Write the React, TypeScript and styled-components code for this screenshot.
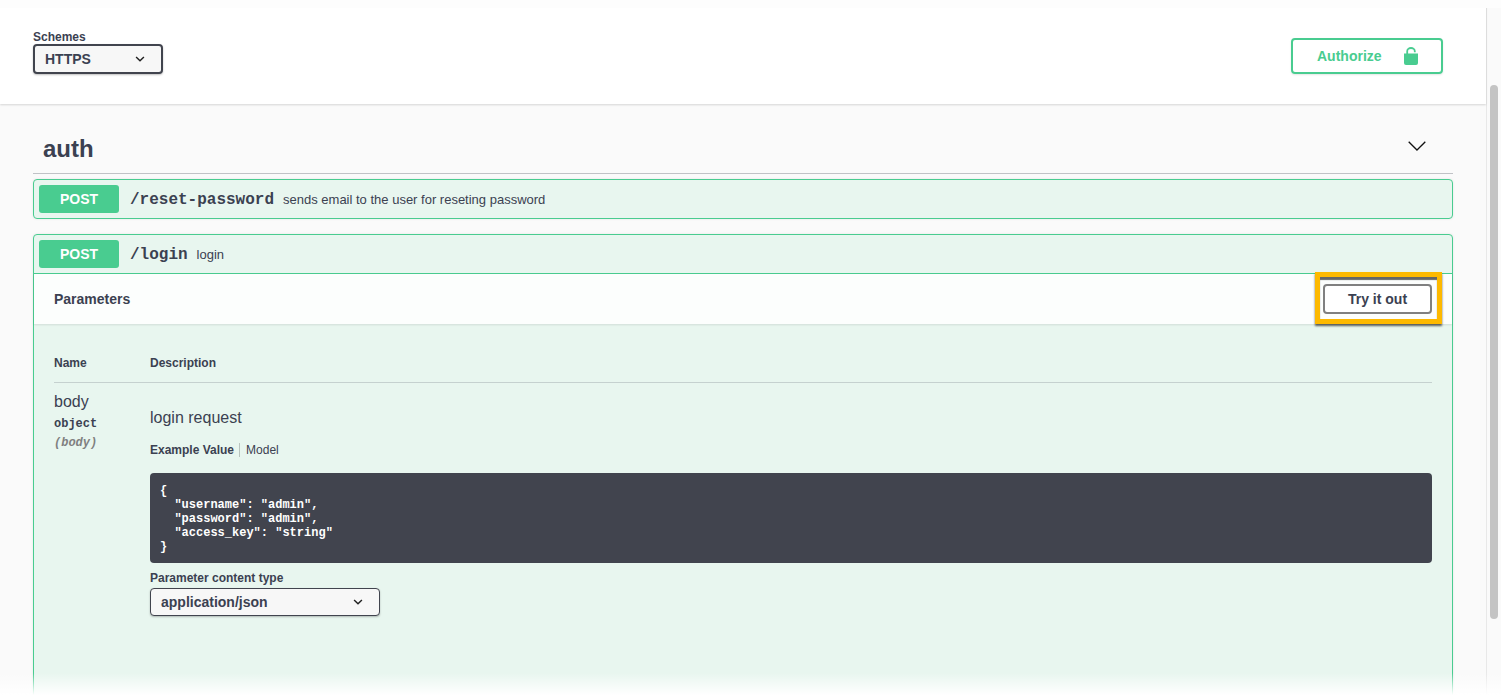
import React, { FC } from 'react';
import styled, { createGlobalStyle } from 'styled-components';

const colours = {
  ink: '#3b4151',
  dark: '#41444e',
  green: '#49cc90',
  greenTint: '#e8f6ef',
  page: '#fafafa',
};

const sans = `'Liberation Sans', Arial, sans-serif`;
const mono = `'Liberation Mono', monospace`;

const GlobalStyle = createGlobalStyle`
  html, body {
    margin: 0;
    height: 100%;
    overflow: hidden;
    background: ${colours.page};
  }
`;

const Page = styled.div`
  display: flex;
  height: 695px;
  position: relative;
  overflow: hidden;
  font-family: ${sans};
  color: ${colours.ink};
`;

const Main = styled.div`
  flex: 1;
  min-width: 0;
  background: ${colours.page};
`;

const ScrollTrack = styled.div`
  width: 15px;
  flex: none;
  background: #fafafa;
  border-left: 1px solid #e8e8e8;
  padding: 85px 3px 0 3px;
  box-sizing: border-box;
`;

const ScrollThumb = styled.div`
  height: 534px;
  background: #c4c4c4;
  border-radius: 4px;
`;

const SchemeBar = styled.header`
  height: 104px;
  box-sizing: border-box;
  background: #fff;
  box-shadow: 0 1px 2px rgba(0, 0, 0, 0.15);
  padding: 30px 43px 0 33px;
  display: flex;
  justify-content: space-between;
  position: relative;
`;

const SchemeLabel = styled.div`
  font-size: 12px;
  font-weight: 700;
  line-height: 14px;
`;

const Select = styled.div<{ $width: number; $thick?: boolean }>`
  width: ${p => p.$width}px;
  height: ${p => (p.$thick ? 30 : 28)}px;
  box-sizing: border-box;
  border: ${p => (p.$thick ? 2 : 1)}px solid ${colours.dark};
  border-radius: 4px;
  background: #f7f7f7;
  box-shadow: 0 1px 2px 0 rgba(0, 0, 0, 0.25);
  display: flex;
  align-items: center;
  justify-content: space-between;
  padding: 0 15px 0 10px;
  font-size: 14px;
  font-weight: 700;
`;

const AuthorizeButton = styled.div`
  width: 152px;
  height: 36px;
  margin-top: 8px;
  box-sizing: border-box;
  border: 2px solid ${colours.green};
  border-radius: 4px;
  box-shadow: 0 1px 2px rgba(0, 0, 0, 0.1);
  color: ${colours.green};
  font-size: 14px;
  font-weight: 700;
  display: flex;
  align-items: center;
  gap: 22px;
  padding-left: 24px;
`;

const Content = styled.main`
  padding: 0 33px;
`;

const TagHeader = styled.div`
  height: 70px;
  box-sizing: border-box;
  padding: 0 27px 0 10px;
  border-bottom: 1px solid rgba(59, 65, 81, 0.3);
  display: flex;
  align-items: center;
  justify-content: space-between;
  font-size: 24px;
  font-weight: 700;
`;

const TagTitle = styled.span`
  margin-top: 20px;
`;

const TagChevron = styled.svg`
  margin-top: 14px;
  display: block;
`;

const OpBlock = styled.section<{ $open?: boolean }>`
  margin-top: ${p => (p.$open ? 15 : 5)}px;
  border: 1px solid ${colours.green};
  border-radius: 4px;
  background: ${colours.greenTint};
  box-shadow: 0 0 3px rgba(0, 0, 0, 0.08);
  ${p => p.$open && 'height: 500px;'}
`;

const OpSummary = styled.div<{ $open?: boolean }>`
  height: ${p => (p.$open ? 39 : 38)}px;
  box-sizing: border-box;
  padding-left: 5px;
  display: flex;
  align-items: center;
  ${p => p.$open && `border-bottom: 1px solid ${colours.green};`}
`;

const MethodBadge = styled.span`
  width: 80px;
  height: 28px;
  border-radius: 3px;
  background: ${colours.green};
  color: #fff;
  font-size: 14px;
  font-weight: 700;
  display: flex;
  align-items: center;
  justify-content: center;
`;

const OpPath = styled.span`
  margin: 1px 0 0 11px;
  font-family: ${mono};
  font-size: 16px;
  font-weight: 700;
`;

const OpDesc = styled.span`
  margin: 1px 0 0 9px;
  font-size: 13px;
`;

const ParamsHeader = styled.div`
  height: 50px;
  box-sizing: border-box;
  padding: 0 20px;
  background: rgba(255, 255, 255, 0.85);
  box-shadow: 0 1px 2px rgba(0, 0, 0, 0.1);
  display: flex;
  align-items: center;
  justify-content: space-between;
  font-size: 14px;
  font-weight: 700;
  position: relative;
`;

const TryButton = styled.div`
  width: 109px;
  height: 30px;
  box-sizing: border-box;
  border: 2px solid #808080;
  border-radius: 4px;
  background: #fff;
  display: flex;
  align-items: center;
  justify-content: center;
  font-size: 14px;
  font-weight: 700;
  position: relative;
`;

const Highlight = styled.div`
  position: absolute;
  left: -10px;
  top: -14px;
  width: 127px;
  height: 52px;
  box-sizing: border-box;
  border: 5px solid #fdb900;
  box-shadow: 0 2px 2px rgba(0, 0, 0, 0.6), inset 0 3px 1px rgba(0, 0, 0, 0.6);
`;

const ParamsBody = styled.div`
  padding: 32px 20px 0;
`;

const ColumnHeads = styled.div`
  height: 26px;
  border-bottom: 1px solid rgba(59, 65, 81, 0.2);
  display: grid;
  grid-template-columns: 96px 1fr;
  font-size: 12px;
  font-weight: 700;
  line-height: 14px;
`;

const ParamRow = styled.div`
  display: grid;
  grid-template-columns: 96px 1fr;
  padding-top: 9px;
`;

const ParamName = styled.div`
  font-size: 16px;
  line-height: 19px;
`;

const ParamType = styled.div<{ $in?: boolean }>`
  font-family: ${mono};
  font-size: 12px;
  font-weight: 700;
  margin-top: 7px;
  line-height: 13px;
  ${p => p.$in && 'font-style: italic; color: #808080; margin-top: 6px;'}
`;

const ParamText = styled.div`
  font-size: 16px;
  line-height: 19px;
  margin-top: 16px;
`;

const TabRow = styled.div`
  display: flex;
  align-items: center;
  font-size: 12px;
  line-height: 14px;
  margin-top: 16px;
`;

const Tab = styled.span<{ $active?: boolean }>`
  font-weight: ${p => (p.$active ? 700 : 400)};
  ${p => p.$active && 'padding-right: 5px; border-right: 1px solid rgba(0, 0, 0, 0.2); margin-right: 6px;'}
`;

const CodeBlock = styled.pre`
  margin: 16px 0 0;
  height: 90px;
  box-sizing: border-box;
  padding: 11px 10px;
  background: ${colours.dark};
  border-radius: 4px;
  color: #fff;
  font-family: ${mono};
  font-size: 12px;
  font-weight: 700;
  line-height: 14px;
`;

const ContentTypeLabel = styled.div`
  margin: 8px 0 3px;
  font-size: 12px;
  font-weight: 700;
  line-height: 14px;
`;

const BottomFade = styled.div`
  position: absolute;
  left: 0;
  right: 0;
  bottom: 0;
  height: 22px;
  background: linear-gradient(rgba(255, 255, 255, 0), #fff);
`;

const TopFade = styled.div`
  position: absolute;
  left: 0;
  right: 0;
  top: 0;
  height: 8px;
  background: #fdfdfd;
`;

const SelectChevron: FC = () => (
  <svg width="12" height="12" viewBox="0 0 20 20">
    <path d="M3.5 6.5 L10 13 L16.5 6.5" fill="none" stroke="#222" strokeWidth="2.4" />
  </svg>
);

const App: FC = () => (
  <>
    <GlobalStyle />
    <Page>
      <Main>
        <SchemeBar>
          <div>
            <SchemeLabel>Schemes</SchemeLabel>
            <Select $width={130} $thick>
              HTTPS
              <SelectChevron />
            </Select>
          </div>
          <AuthorizeButton>
            Authorize
            <svg width="14" height="18" viewBox="0 0 14 18">
              <path d="M3.2 7 V4.2 a3.8 3.2 0 0 1 7.6 0 V5.2" fill="none" stroke={colours.green} strokeWidth="1.8" />
              <path d="M0 6.5 h14 v9.5 a2 2 0 0 1 -2 2 h-10 a2 2 0 0 1 -2 -2 z" fill={colours.green} />
            </svg>
          </AuthorizeButton>
        </SchemeBar>
        <Content>
          <TagHeader>
            <TagTitle>auth</TagTitle>
            <TagChevron width="18" height="10" viewBox="0 0 18 10">
              <path d="M0.7 0.7 L9 9 L17.3 0.7" fill="none" stroke="#111" strokeWidth="1.3" />
            </TagChevron>
          </TagHeader>
          <OpBlock>
            <OpSummary>
              <MethodBadge>POST</MethodBadge>
              <OpPath>/reset-password</OpPath>
              <OpDesc>sends email to the user for reseting password</OpDesc>
            </OpSummary>
          </OpBlock>
          <OpBlock $open>
            <OpSummary $open>
              <MethodBadge>POST</MethodBadge>
              <OpPath>/login</OpPath>
              <OpDesc>login</OpDesc>
            </OpSummary>
            <ParamsHeader>
              Parameters
              <TryButton>
                Try it out
                <Highlight />
              </TryButton>
            </ParamsHeader>
            <ParamsBody>
              <ColumnHeads>
                <span>Name</span>
                <span>Description</span>
              </ColumnHeads>
              <ParamRow>
                <div>
                  <ParamName>body</ParamName>
                  <ParamType>object</ParamType>
                  <ParamType $in>(body)</ParamType>
                </div>
                <div>
                  <ParamText>login request</ParamText>
                  <TabRow>
                    <Tab $active>Example Value</Tab>
                    <Tab>Model</Tab>
                  </TabRow>
                  <CodeBlock>{`{
  "username": "admin",
  "password": "admin",
  "access_key": "string"
}`}</CodeBlock>
                  <ContentTypeLabel>Parameter content type</ContentTypeLabel>
                  <Select $width={230}>
                    application/json
                    <SelectChevron />
                  </Select>
                </div>
              </ParamRow>
            </ParamsBody>
          </OpBlock>
        </Content>
      </Main>
      <ScrollTrack>
        <ScrollThumb />
      </ScrollTrack>
      <TopFade />
      <BottomFade />
    </Page>
  </>
);

export default App;
